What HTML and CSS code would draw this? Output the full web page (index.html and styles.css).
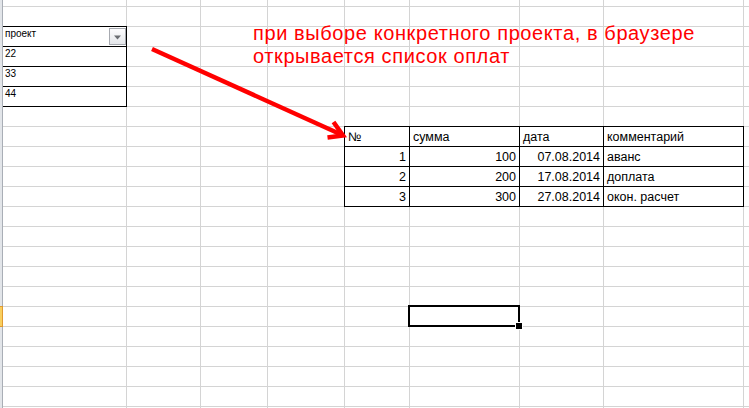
FILE: index.html
```html
<!DOCTYPE html>
<html lang="ru">
<head>
<meta charset="utf-8">
<title>Лист</title>
<link rel="stylesheet" href="styles.css">
</head>
<body>
<div class="sheet">
  <div class="row-headers"></div>
  <div class="row-header-active"></div>

  <div class="filter-table">
    <div class="ft-row ft-head">
      <span>проект</span>
      <span class="filter-btn"><svg width="9" height="5" viewBox="0 0 9 5"><polygon points="1,0.5 8,0.5 4.5,4.5" fill="#6b6e73"/></svg></span>
    </div>
    <div class="ft-row">22</div>
    <div class="ft-row">33</div>
    <div class="ft-row">44</div>
  </div>

  <div class="pay-table">
    <div class="pc">№</div>
    <div class="pc">сумма</div>
    <div class="pc">дата</div>
    <div class="pc">комментарий</div>
    <div class="pc num">1</div>
    <div class="pc num">100</div>
    <div class="pc num">07.08.2014</div>
    <div class="pc">аванс</div>
    <div class="pc num">2</div>
    <div class="pc num">200</div>
    <div class="pc num">17.08.2014</div>
    <div class="pc">доплата</div>
    <div class="pc num">3</div>
    <div class="pc num">300</div>
    <div class="pc num">27.08.2014</div>
    <div class="pc">окон. расчет</div>
  </div>

  <div class="active-cell"></div>

  <p class="note">при выборе конкретного проекта, в браузере<br>открывается список оплат</p>

  <svg class="arrow" width="749" height="408" viewBox="0 0 749 408">
    <line x1="152" y1="49" x2="340" y2="134" stroke="#ff0000" stroke-width="4.5"/>
    <polyline points="333.5,122 343,135.5 327.5,137.5" fill="none" stroke="#ff0000" stroke-width="4.5" stroke-linejoin="miter"/>
  </svg>
</div>
</body>
</html>
```

FILE: styles.css
```css
html, body {
  margin: 0;
  padding: 0;
  background: #ffffff;
  overflow: hidden;
}

.sheet {
  position: relative;
  width: 749px;
  height: 408px;
  overflow: hidden;
  display: grid;
  grid-template-columns: 3px 124px 74px 67px 77px 65px 110px 84px 140px 1fr;
  grid-template-rows: 7px repeat(21, 20px);
  font-family: "Liberation Sans", Arial, sans-serif;
  color: #000;
  background-color: #ffffff;
  background-image:
    linear-gradient(#d4d4d4, #d4d4d4),
    linear-gradient(#d4d4d4, #d4d4d4),
    linear-gradient(#d4d4d4, #d4d4d4),
    linear-gradient(#d4d4d4, #d4d4d4),
    linear-gradient(#d4d4d4, #d4d4d4),
    linear-gradient(#d4d4d4, #d4d4d4),
    linear-gradient(#d4d4d4, #d4d4d4),
    linear-gradient(#d4d4d4, #d4d4d4),
    linear-gradient(to bottom, transparent 19px, #d4d4d4 19px);
  background-size:
    1px 100%, 1px 100%, 1px 100%, 1px 100%,
    1px 100%, 1px 100%, 1px 100%, 1px 100%,
    100% 20px;
  background-position:
    126px 0, 200px 0, 267px 0, 344px 0,
    409px 0, 519px 0, 603px 0, 743px 0,
    0 7px;
  background-repeat:
    no-repeat, no-repeat, no-repeat, no-repeat,
    no-repeat, no-repeat, no-repeat, no-repeat,
    repeat-y;
}

.row-headers {
  grid-column: 1;
  grid-row: 1 / -1;
  box-sizing: border-box;
  background: #e2e5e9;
  border-right: 1px solid #a9aeb6;
}

.row-header-active {
  grid-column: 1;
  grid-row: 17;
  margin-top: -1px;
  box-sizing: border-box;
  background: #f9cf5e;
  border-right: 1px solid #e09a30;
  border-top: 1px solid #e09a30;
  border-bottom: 1px solid #e09a30;
}

/* left filter table */
.filter-table {
  grid-column: 2;
  grid-row: 3 / 7;
  margin-top: -1px;
  border-top: 1px solid #000;
  border-right: 1px solid #000;
  background: #fff;
  display: flex;
  flex-direction: column;
  font-size: 10px;
  line-height: 12px;
}

.ft-row {
  height: 20px;
  box-sizing: border-box;
  border-bottom: 1px solid #000;
  padding: 1px 0 0 2px;
  display: flex;
  justify-content: space-between;
  align-items: flex-start;
}

.filter-btn {
  width: 17px;
  height: 17px;
  box-sizing: border-box;
  border: 1px solid #a7aab0;
  background: linear-gradient(#fdfdfe, #e4e6ea);
  display: flex;
  align-items: center;
  justify-content: center;
}

.filter-btn svg {
  display: block;
  margin-top: 1px;
}

/* payments table */
.pay-table {
  grid-column: 6 / 10;
  grid-row: 8 / 12;
  margin: -1px 0 0 -1px;
  border-top: 1px solid #000;
  border-left: 1px solid #000;
  background: #fff;
  display: grid;
  grid-template-columns: 65px 110px 84px 140px;
  grid-auto-rows: 20px;
  font-size: 12.5px;
  line-height: 15px;
}

.pc {
  box-sizing: border-box;
  border-right: 1px solid #000;
  border-bottom: 1px solid #000;
  padding: 3px 3px 0 3px;
  white-space: nowrap;
  overflow: hidden;
}

.pc.num {
  text-align: right;
  padding-right: 3px;
}

/* selected cell */
.active-cell {
  grid-column: 7;
  grid-row: 17;
  margin: -2px 0 0 -2px;
  border: 2px solid #000;
  position: relative;
}

.active-cell::after {
  content: "";
  position: absolute;
  left: 105px;
  top: 15px;
  width: 6px;
  height: 6px;
  background: #000;
  border: 1px solid #fff;
}

/* annotation */
.note {
  position: absolute;
  left: 253px;
  top: 22px;
  margin: 0;
  color: #ff0000;
  font-size: 20px;
  letter-spacing: 0.6px;
  line-height: 23px;
  white-space: nowrap;
}

.arrow {
  position: absolute;
  left: 0;
  top: 0;
  pointer-events: none;
}
```
